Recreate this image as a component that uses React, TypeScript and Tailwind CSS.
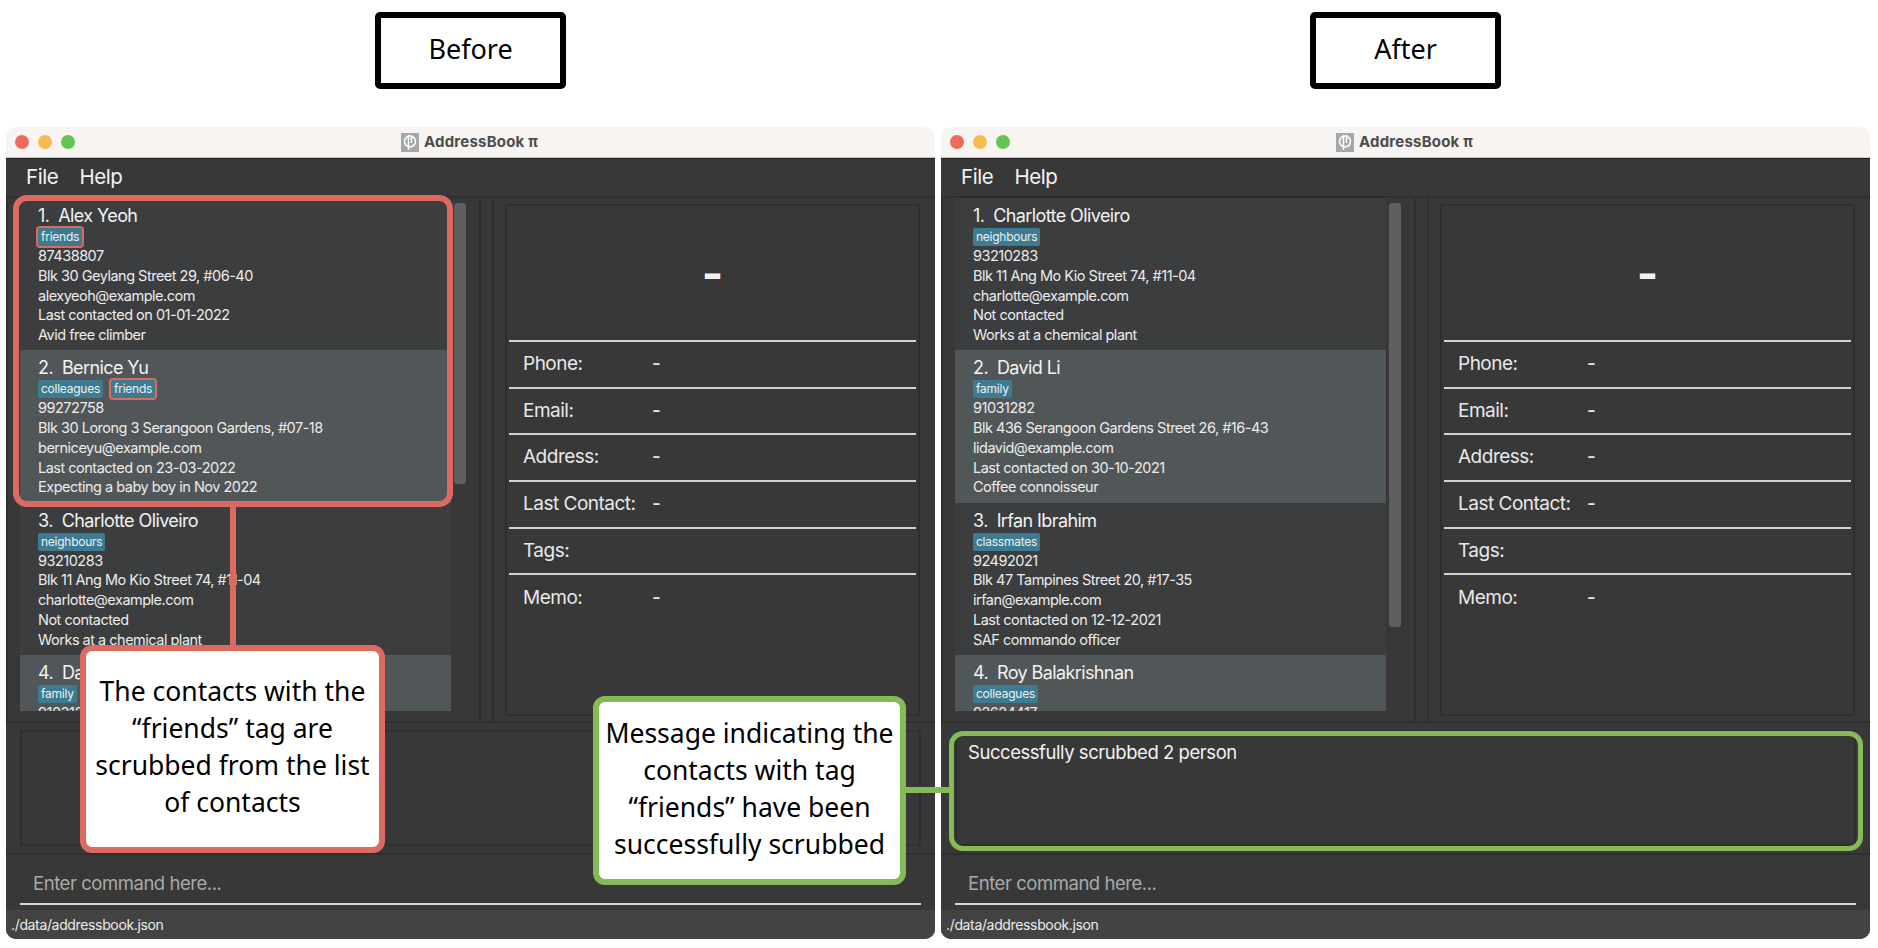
type Person = {
  name: string;
  tags: { label: string; marked?: boolean }[];
  phone: string;
  address: string;
  email: string;
  contact: string;
  memo: string;
};

const charlotte = {
  name: "Charlotte Oliveiro",
  tags: [{ label: "neighbours" }],
  phone: "93210283",
  address: "Blk 11 Ang Mo Kio Street 74, #11-04",
  email: "charlotte@example.com",
  contact: "Not contacted",
  memo: "Works at a chemical plant",
};

const david = {
  name: "David Li",
  tags: [{ label: "family" }],
  phone: "91031282",
  address: "Blk 436 Serangoon Gardens Street 26, #16-43",
  email: "lidavid@example.com",
  contact: "Last contacted on 30-10-2021",
  memo: "Coffee connoisseur",
};

const before: Person[] = [
  {
    name: "Alex Yeoh",
    tags: [{ label: "friends", marked: true }],
    phone: "87438807",
    address: "Blk 30 Geylang Street 29, #06-40",
    email: "alexyeoh@example.com",
    contact: "Last contacted on 01-01-2022",
    memo: "Avid free climber",
  },
  {
    name: "Bernice Yu",
    tags: [{ label: "colleagues" }, { label: "friends", marked: true }],
    phone: "99272758",
    address: "Blk 30 Lorong 3 Serangoon Gardens, #07-18",
    email: "berniceyu@example.com",
    contact: "Last contacted on 23-03-2022",
    memo: "Expecting a baby boy in Nov 2022",
  },
  charlotte,
  david,
];

const after: Person[] = [
  charlotte,
  david,
  {
    name: "Irfan Ibrahim",
    tags: [{ label: "classmates" }],
    phone: "92492021",
    address: "Blk 47 Tampines Street 20, #17-35",
    email: "irfan@example.com",
    contact: "Last contacted on 12-12-2021",
    memo: "SAF commando officer",
  },
  {
    name: "Roy Balakrishnan",
    tags: [{ label: "colleagues" }],
    phone: "92624417",
    address: "Blk 45 Aljunied Street 85, #11-31",
    email: "royb@example.com",
    contact: "Last contacted on 01-01-2022",
    memo: "Plays the guitar",
  },
];

const fields = ["Phone:", "Email:", "Address:", "Last Contact:", "Tags:", "Memo:"];

function AppIcon() {
  return (
    <svg width="18" height="19" viewBox="0 0 18 19" className="shrink-0">
      <rect width="18" height="19" fill="#a3a8ab" />
      <circle cx="9" cy="8.5" r="5.5" fill="none" stroke="#fff" strokeWidth="1.5" />
      <path d="M7.5 2v15M10.5 2v8" stroke="#fff" strokeWidth="1.5" fill="none" />
    </svg>
  );
}

function PersonCard({ person, index }: { person: Person; index: number }) {
  return (
    <div className={`h-[152.3px] shrink-0 pl-[18px] pt-[5px] ${index % 2 === 0 ? "bg-[#3c3d3e]" : "bg-[#515658]"}`}>
      <div className="h-[25px] text-[18px] leading-[25px] tracking-[-0.6px] whitespace-pre text-[#f2f2f2]">
        {index + 1}.  {person.name}
      </div>
      <div className="flex h-[18px] gap-[8px]">
        {person.tags.map((tag) => (
          <span
            key={tag.label}
            className={`rounded-[2px] bg-[#3e7b91] px-[3px] text-[12px] leading-[18px] tracking-[-0.25px] text-[#e8f2f5] ${
              tag.marked ? "outline-2 outline-[#db6a61]" : ""
            }`}
          >
            {tag.label}
          </span>
        ))}
      </div>
      <div className="text-[14.5px] leading-[19.8px] tracking-[-0.5px] whitespace-nowrap text-[#ececec]">
        <div>{person.phone}</div>
        <div>{person.address}</div>
        <div>{person.email}</div>
        <div>{person.contact}</div>
        <div>{person.memo}</div>
      </div>
    </div>
  );
}

function AppWindow({ people, message, thumb }: { people: Person[]; message?: string; thumb: number }) {
  return (
    <div className="h-[812px] w-[929px] overflow-hidden rounded-t-[10px] rounded-b-[10px] font-['Inter',sans-serif]">
      <div className="relative flex h-[31px] items-center justify-center gap-[5px] border-b border-[#c9c6c4] bg-[#f7f4f2] pr-[2px]">
        <div className="absolute left-[9px] flex gap-[9px]">
          <span className="h-[14px] w-[14px] rounded-full bg-[#ee6a5f]" />
          <span className="h-[14px] w-[14px] rounded-full bg-[#f5bd4f]" />
          <span className="h-[14px] w-[14px] rounded-full bg-[#61c554]" />
        </div>
        <AppIcon />
        <span className="text-[15px] font-bold tracking-[0.2px] text-[#4c4c4c]">AddressBook π</span>
      </div>

      <div className="flex h-[781px] flex-col bg-[#383838]">
        <div className="flex h-[38px] shrink-0 items-center gap-[21px] border-t border-[#222] pl-[20px] text-[20.5px] tracking-[-0.4px] text-[#f2f2f2]">
          <span>File</span>
          <span>Help</span>
        </div>

        <div className="flex h-[527px] shrink-0 border-y-2 border-[#2f2f2f]">
          <div className="flex w-[475px] shrink-0 border-r-2 border-l-2 border-[#2f2f2f] pl-[12px]">
            <div className="flex h-[513px] w-[431px] shrink-0 flex-col overflow-hidden">
              {people.map((person, i) => (
                <PersonCard key={person.name} person={person} index={i} />
              ))}
            </div>
            <div className="mt-[5px] ml-[3px] w-[12px] rounded-[3px] bg-[#5f5f5f]" style={{ height: thumb }} />
          </div>
          <div className="ml-[11px] flex-1 border-l-2 border-[#2f2f2f] pt-[6px] pr-[15px] pl-[11px]">
            <div className="flex h-[512px] flex-col border-2 border-[#2e2e2e] px-[2px]">
              <div className="flex h-[134px] shrink-0 items-center justify-center text-[46px] leading-none font-bold text-[#f2f2f2]">
                -
              </div>
              {fields.map((field) => (
                <div
                  key={field}
                  className="flex h-[46.7px] shrink-0 items-center border-t-2 border-[#d2d2d2] text-[19px] tracking-[-0.5px] text-[#e8e8e8]"
                >
                  <span className="w-[143px] shrink-0 pl-[14px]">{field}</span>
                  {field !== "Tags:" && <span className="font-medium">-</span>}
                </div>
              ))}
            </div>
          </div>
        </div>

        <div className="h-[132px] shrink-0 border-b-2 border-[#2f2f2f] px-[14px] pt-[7px]">
          <div className="h-[116px] border-2 border-[#2f2f2f] pt-[7px] pl-[11px] text-[18.5px] tracking-[-0.45px] text-[#f2f2f2]">
            {message}
          </div>
        </div>

        <div className="h-[55px] shrink-0 px-[14px]">
          <div className="flex h-[50px] items-center border-b-2 border-[#d8d8d8] pt-[9px] pl-[13px] text-[18.5px] tracking-[-0.45px] text-[#a9a9a9]">
            Enter command here...
          </div>
        </div>

        <div className="flex flex-1 items-center bg-[#434343] pl-[5px] text-[14px] tracking-[-0.35px] text-[#ececec]">
          ./data/addressbook.json
        </div>
      </div>
    </div>
  );
}

function Column({ title, children }: { title: string; children: React.ReactNode }) {
  return (
    <div className="flex w-[929px] flex-col">
      <div className="flex h-[127px] justify-center pt-[12px]">
        <div className="flex h-[77px] w-[191px] items-center justify-center rounded-[5px] border-[6px] border-black pb-[2px] font-['Noto_Sans',sans-serif] text-[27px] text-black">
          {title}
        </div>
      </div>
      {children}
    </div>
  );
}

export default function App() {
  return (
    <div className="relative flex h-[948px] w-[1878px] gap-[6px] overflow-hidden bg-white pl-[6px]">
      <Column title="Before">
        <AppWindow people={before} thumb={281} />
      </Column>
      <Column title="After">
        <AppWindow people={after} message="Successfully scrubbed 2 person" thumb={424} />
      </Column>

      {/* annotations over the two windows */}
      <div className="absolute top-[195px] left-[13px] h-[312px] w-[440px] rounded-[14px] border-[6px] border-[#db6a61]" />
      <div className="absolute top-[507px] left-[230px] h-[142px] w-[6px] bg-[#db6a61]" />
      <div className="absolute top-[645px] left-[80px] flex h-[208px] w-[305px] flex-col items-center justify-center rounded-[12px] border-[6px] border-[#db6a61] bg-white pb-[4px] text-center font-['Noto_Sans',sans-serif] text-[26.5px] leading-[37px] text-black">
        <span>The contacts with the</span>
        <span>“friends” tag are</span>
        <span>scrubbed from the list</span>
        <span>of contacts</span>
      </div>

      <div className="absolute top-[731px] left-[949px] h-[120px] w-[914px] rounded-[14px] border-[5px] border-[#85bb57]" />
      <div className="absolute top-[787px] left-[906px] h-[6px] w-[44px] bg-[#85bb57]" />
      <div className="absolute top-[696px] left-[593px] flex h-[189px] w-[313px] flex-col items-center justify-center rounded-[12px] border-[6px] border-[#85bb57] bg-white pb-[4px] text-center font-['Noto_Sans',sans-serif] text-[26.5px] leading-[37px] text-black">
        <span>Message indicating the</span>
        <span>contacts with tag</span>
        <span>“friends” have been</span>
        <span>successfully scrubbed</span>
      </div>
    </div>
  );
}
